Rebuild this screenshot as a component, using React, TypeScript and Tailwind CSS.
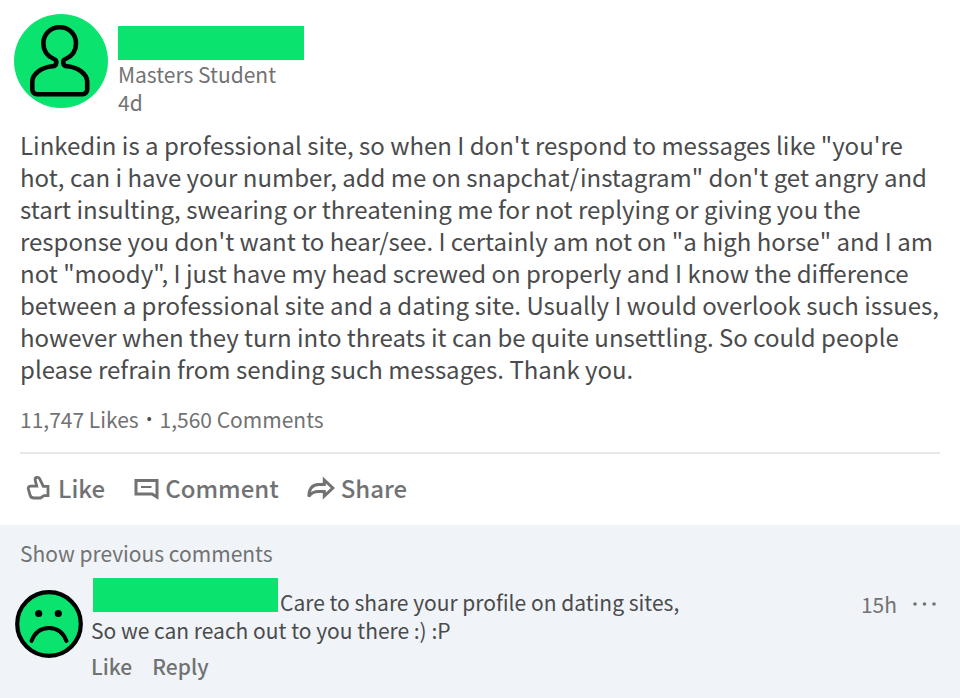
import type { ReactNode } from 'react'

function PersonAvatar() {
  return (
    <svg viewBox="0 0 94 94" className="size-[94px] shrink-0" aria-hidden="true">
      <circle cx="47" cy="47" r="47" fill="#0be36f" />
      <path
        d="M40 45C33 42 29.4 36 29.4 29.5C29.4 20 36.5 13.3 45.7 13.3C55 13.3 62 20 62 29.5C62 36 58.5 42 51.5 45C48 46.5 48.5 51.8 53 52.3C64.5 53.5 73.2 60 73.2 67.5V75.5C73.2 78.2 71.2 80.2 68.5 80.2H23C20.3 80.2 18.3 78.2 18.3 75.5V67.500C18.3 60 27 53.5 38.5 52.3C43 51.8 43.5 46.5 40 45Z"
        fill="none"
        stroke="#000"
        strokeWidth="4.6"
        strokeLinejoin="round"
      />
    </svg>
  )
}

function SadAvatar() {
  return (
    <svg viewBox="0 0 68 68" className="mt-3 size-[68px] shrink-0" aria-hidden="true">
      <circle cx="34" cy="34" r="31.8" fill="#0be36f" stroke="#000" strokeWidth="4.2" />
      <circle cx="23.7" cy="23.5" r="3.6" />
      <circle cx="43.3" cy="23.5" r="3.6" />
      <path d="M16.5 51C20 42 26 38 34 38C42 38 48 42 51.5 51" fill="none" stroke="#000" strokeWidth="4" strokeLinecap="round" />
    </svg>
  )
}

function LikeIcon() {
  return (
    <svg viewBox="0 0 26 26" className="size-[26px]" fill="none" stroke="currentColor" strokeWidth="2.8" aria-hidden="true">
      <path d="M22 11.3H17.3L13.6 3.6C12.4 1.4 8.6 2.2 9.200 5.200L10.700 11.200H4.500C2.300 11.200 1.700 13 2.500 14.500L4.200 20.500C4.700 22.200 6 23 8 23H14.500L18 20.700H22Z" />
    </svg>
  )
}

function CommentIcon() {
  return (
    <svg viewBox="0 0 26 26" className="size-[26px]" fill="none" stroke="currentColor" strokeWidth="3" aria-hidden="true">
      <path d="M3 5.5H24V22L19 19H3Z" />
      <path d="M8 12H18.5" strokeWidth="2" />
    </svg>
  )
}

function ShareIcon() {
  return (
    <svg viewBox="0 0 28 26" className="h-[26px] w-[28px]" fill="none" stroke="currentColor" strokeWidth="3" aria-hidden="true">
      <path d="M17.3 5L25.8 13L17.3 21V16.5H12C7 16.5 3.8 18 1.8 21.5C2 14.5 5 9.7 11.5 9.5H17.3Z" />
    </svg>
  )
}

function Action({ icon, children }: { icon: ReactNode; children: ReactNode }) {
  return (
    <button type="button" className="flex items-center gap-1.5">
      {icon}
      {children}
    </button>
  )
}

export default function App() {
  return (
    <div className="min-h-screen bg-[#f0f4f8] font-['Noto_Sans_CJK_SC',sans-serif] text-[21px] leading-7 text-[#717273]">
      <article className="bg-white">
        <header className="flex gap-2.5 px-3.5 pt-3.5">
          <PersonAvatar />
          <div className="pt-3">
            <div className="h-[34px] w-[186px] bg-[#0be36f]" />
            <p>Masters Student</p>
            <p>4d</p>
          </div>
        </header>

        <p className="mt-[13px] px-5 text-[24px] leading-8 text-[#4a4b4c]">
          Linkedin is a professional site, so when I don't respond to messages like "you're hot, can i have your number,
          add me on snapchat/instagram" don't get angry and start insulting, swearing or threatening me for not replying
          or giving you the response you don't want to hear/see. I certainly am not on "a high horse" and I am not
          "moody", I just have my head screwed on properly and I know the difference between a professional site and a
          dating site. Usually I would overlook such issues, however when they turn into threats it can be quite
          unsettling. So could people please refrain from sending such messages. Thank you.
        </p>

        <div className="mx-5 mt-5 flex gap-2 border-b-2 border-[#e6e9ec] pb-[19px]">
          <span>11,747 Likes</span>
          <span className="font-['Liberation_Sans',sans-serif] text-[14px] text-[#4a4b4c]">•</span>
          <span>1,560 Comments</span>
        </div>

        <div className="flex gap-7 px-[26px] pt-[18px] pb-[21px] text-[24px] leading-8 font-medium">
          <Action icon={<LikeIcon />}>Like</Action>
          <Action icon={<CommentIcon />}>Comment</Action>
          <Action icon={<ShareIcon />}>Share</Action>
        </div>
      </article>

      <section className="pt-3.5 pr-6 pl-[15px]">
        <button type="button" className="ml-[5px] block">
          Show previous comments
        </button>
        <div className="mt-[11px] flex items-start gap-2">
          <SadAvatar />
          <div className="grow text-[#4a4b4c]">
            <div className="flex items-start gap-0.5">
              <div className="ml-0.5 h-[34px] w-[185px] bg-[#0be36f]" />
              <p className="pt-2.5">Care to share your profile on dating sites,</p>
            </div>
            <p>So we can reach out to you there :) :P</p>
            <div className="mt-2 flex gap-5 font-medium text-[#717273]">
              <button type="button">Like</button>
              <button type="button">Reply</button>
            </div>
          </div>
          <div className="flex items-center gap-4 pt-3">
            <span>15h</span>
            <button type="button" aria-label="More options">
              <svg viewBox="0 0 23 4" className="h-1 w-[23px]" fill="currentColor" aria-hidden="true">
                <circle cx="2" cy="2" r="1.8" />
                <circle cx="11.5" cy="2" r="1.8" />
                <circle cx="21" cy="2" r="1.8" />
              </svg>
            </button>
          </div>
        </div>
      </section>
    </div>
  )
}
